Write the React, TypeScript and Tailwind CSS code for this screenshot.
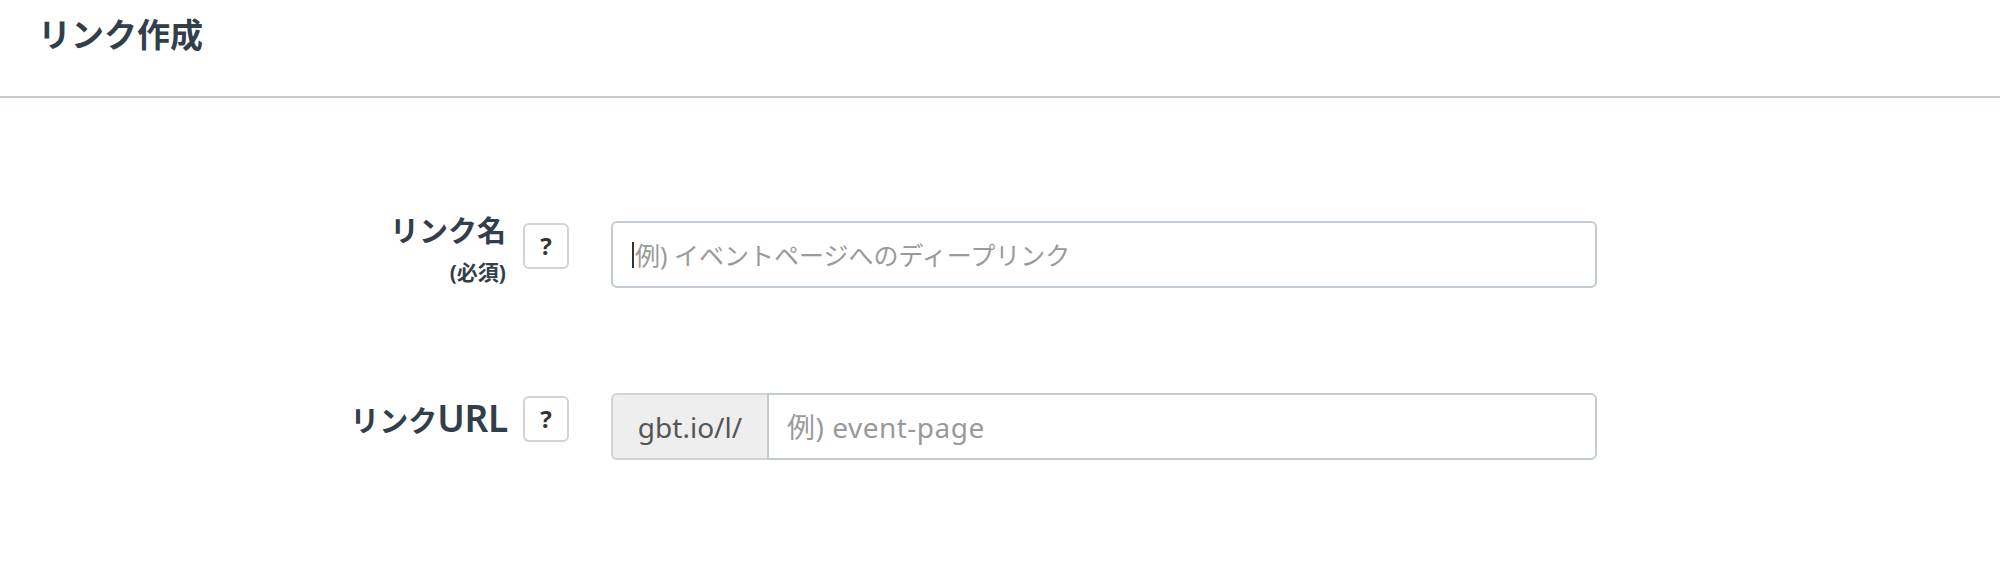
const font = { fontFamily: '"Noto Sans", "Noto Sans CJK JP", sans-serif' };

function HelpButton({ className = "" }: { className?: string }) {
  return (
    <button
      type="button"
      className={`flex h-[46px] w-[46px] shrink-0 items-center justify-center rounded-[6px] border-2 border-[#d3d3d3] bg-white text-[24px] font-bold leading-none text-[#333] ${className}`}
    >
      ?
    </button>
  );
}

export default function App() {
  return (
    <div className="min-h-[576px] bg-white text-[#333e4b]" style={font}>
      <header className="h-[98px] border-b-2 border-[#c3ccd5] pl-[38px] pt-[12px]">
        <h1 className="text-[33px] font-bold leading-[46px]">リンク作成</h1>
      </header>

      <form className="flex flex-col gap-[105px] pt-[123px]">
        <div className="flex items-start">
          <div className="-mt-[8px] w-[506px] text-right">
            <div className="text-[29px] font-bold leading-[36px]">リンク名</div>
            <div className="mt-[11px] text-[21px] font-bold leading-[24px]">(必須)</div>
          </div>
          <HelpButton className="ml-[17px] mt-[2px]" />
          <div className="relative ml-[42px] w-[986px]">
            <input
              type="text"
              placeholder="例) イベントページへのディープリンク"
              className="h-[67px] w-full rounded-[6px] border-2 border-[#c3ccd5] bg-white pl-[22px] text-[25px] text-[#333] outline-none placeholder:text-[#9a9a9a]"
            />
            <span className="absolute left-[21px] top-[21px] h-[26px] w-[2px] bg-[#333]" />
          </div>
        </div>

        <div className="flex items-start">
          <div className="mt-[10px] w-[508px] text-right">
            <div className="text-[29px] font-bold leading-[36px]">
              リンク<span className="text-[37px] font-semibold leading-[0px] tracking-[-0.3px]">URL</span>
            </div>
          </div>
          <HelpButton className="ml-[15px] mt-[3px]" />
          <div className="ml-[42px] flex h-[67px] w-[986px]">
            <span className="flex w-[156px] shrink-0 items-center justify-center rounded-l-[6px] border-2 border-r-0 border-[#cfd4d9] bg-[#eeeeee] text-[28px] text-[#555]">
              gbt.io/l/
            </span>
            <input
              type="text"
              placeholder="例) event-page"
              className="h-full min-w-0 flex-1 rounded-r-[6px] border-2 border-[#c3ccd5] bg-white pl-[18px] text-[28px] text-[#333] outline-none placeholder:tracking-[0.5px] placeholder:text-[#9a9a9a]"
            />
          </div>
        </div>
      </form>
    </div>
  );
}
